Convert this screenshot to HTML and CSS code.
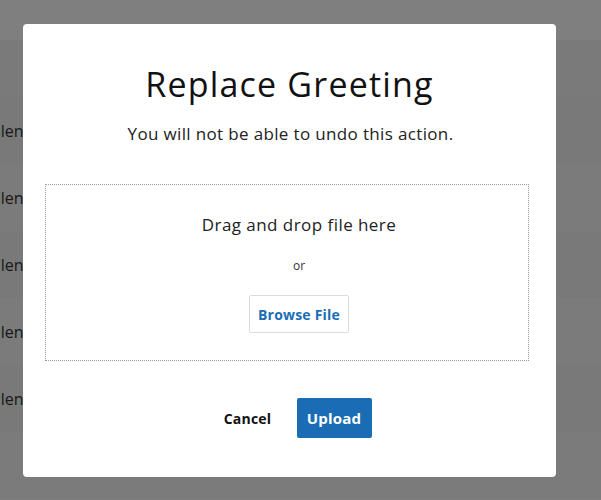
FILE: index.html
```html
<!DOCTYPE html>
<html>
<head>
<meta charset="utf-8">
<link rel="stylesheet" href="styles.css">
</head>
<body>
<div class="page">
  <div class="topbar"></div>
  <div class="subhead"></div>
  <div class="row"><span class="cell">Silence</span></div>
  <div class="row alt"><span class="cell">Silence</span></div>
  <div class="row"><span class="cell">Silence</span></div>
  <div class="row alt"><span class="cell">Silence</span></div>
  <div class="row"><span class="cell">Silence</span></div>
  <div class="row alt"></div>
</div>
<div class="overlay">
  <div class="modal">
    <h1 class="title">Replace Greeting</h1>
    <p class="subtitle">You will not be able to undo this action.</p>
    <div class="dropzone">
      <div class="drop-text">Drag and drop file here</div>
      <div class="or">or</div>
      <button class="browse">Browse File</button>
    </div>
    <div class="actions">
      <button class="cancel">Cancel</button>
      <button class="upload">Upload</button>
    </div>
  </div>
</div>
</body>
</html>
```
FILE: styles.css
```css
* { box-sizing: border-box; }
html, body { margin: 0; padding: 0; }
body {
  font-family: "Open Sans", Lato, sans-serif;
  font-variant-ligatures: none;
  background: #fff;
  width: 601px;
  height: 500px;
  overflow: hidden;
}
.page { display: flex; flex-direction: column; }
.topbar { height: 40px; background: #fefefe; }
.subhead { height: 57px; background: #f4f4f4; }
.row {
  height: 67px;
  background: #f2f2f2;
  display: flex;
  align-items: center;
}
.row.alt { background: #f6f6f6; }
.cell {
  font-size: 16px;
  color: #333;
  margin-left: -12px;
}
.overlay {
  position: fixed;
  inset: 0;
  background: rgba(0, 0, 0, 0.5);
  display: flex;
  align-items: flex-start;
  justify-content: flex-start;
  padding: 24px 0 0 23px;
}
.modal {
  width: 533px;
  height: 453px;
  background: #fff;
  border-radius: 4px;
  padding: 0 27px 0 22px;
  display: flex;
  flex-direction: column;
  align-items: stretch;
  color: #111;
}
.title {
  margin: 40px 0 0;
  font-size: 34px;
  font-weight: 400;
  line-height: 40px;
  letter-spacing: 1.2px;
  text-align: center;
  padding-left: 5px;
}
.subtitle {
  margin: 19px 0 0;
  font-size: 17px;
  line-height: 22px;
  letter-spacing: 0.35px;
  text-align: center;
  color: #222;
  padding-left: 7px;
}
.dropzone {
  margin-top: 39px;
  height: 177px;
  border: 1px dotted #999;
  padding-left: 24px;
  display: flex;
  flex-direction: column;
  align-items: center;
}
.drop-text {
  margin-top: 29px;
  font-size: 17px;
  line-height: 22px;
  letter-spacing: 0.45px;
  color: #222;
}
.or {
  margin-top: 22px;
  font-size: 12px;
  line-height: 16px;
  color: #333;
}
.browse {
  margin-top: 21px;
  width: 100px;
  height: 38px;
  border: 1px solid #dcdcdc;
  border-radius: 2px;
  background: #fff;
  color: #1a6db5;
  font-family: "Open Sans", Lato, sans-serif;
  font-weight: 700;
  font-size: 14px;
  letter-spacing: 0.2px;
  padding: 0;
}
.actions {
  margin-top: 37px;
  display: flex;
  justify-content: center;
  gap: 9px;
  padding-left: 5px;
}
.cancel {
  width: 80px;
  height: 40px;
  border: none;
  background: transparent;
  font-family: "Open Sans", Lato, sans-serif;
  font-weight: 700;
  font-size: 14px;
  letter-spacing: 0.2px;
  color: #111;
  padding: 0;
}
.upload {
  width: 75px;
  height: 40px;
  border: none;
  border-radius: 2px;
  background: #1a6db5;
  color: #fff;
  font-family: "Open Sans", Lato, sans-serif;
  font-weight: 700;
  font-size: 15px;
  letter-spacing: 0.2px;
  padding: 0;
}
```
